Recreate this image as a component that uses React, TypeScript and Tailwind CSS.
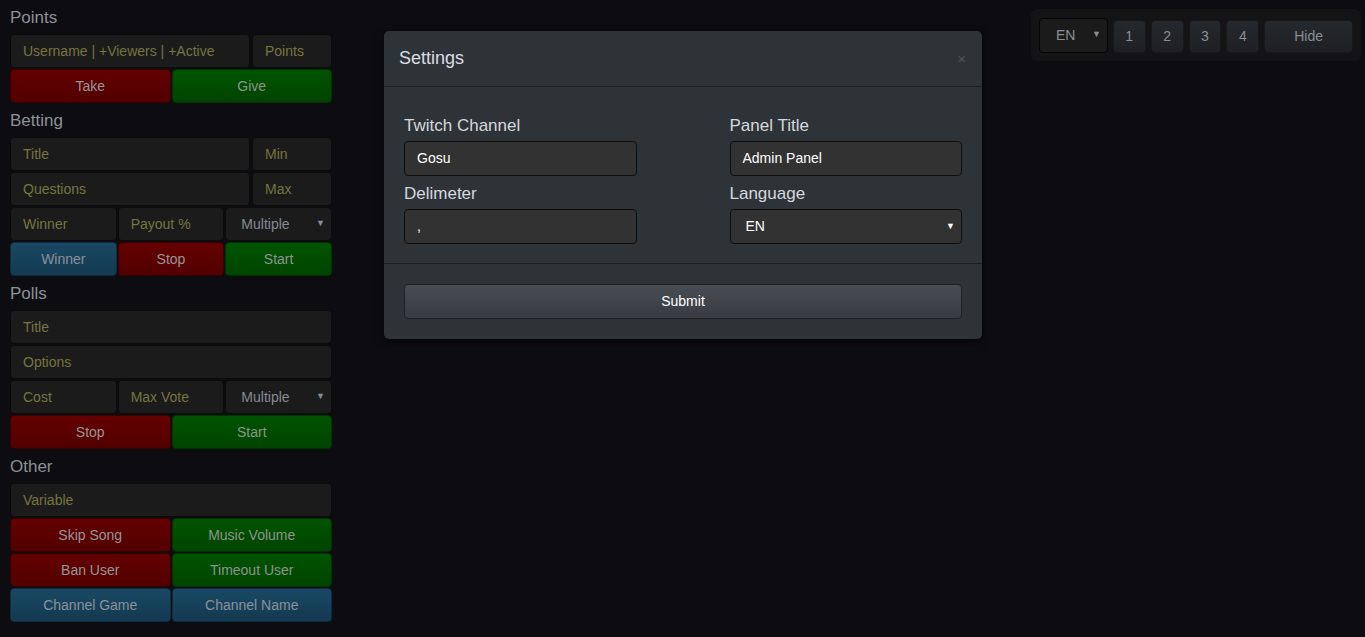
import React from "react";

const inp =
  "h-[34px] flex items-center px-[12px] rounded-[4px] bg-[#1b1b1c] border border-[#0b0b0d] text-[14px] text-[#77743f]";
const sel =
  "h-[34px] flex items-center justify-between pl-[15px] pr-[6px] rounded-[4px] bg-[#1b1b1c] border border-[#0b0b0d] text-[14px] text-[#858a93]";
const red =
  "h-[34px] flex items-center justify-center rounded-[4px] bg-gradient-to-b from-[#640000] to-[#520000] border border-[#380000] text-[14px] text-[#969696]";
const green =
  "h-[34px] flex items-center justify-center rounded-[4px] bg-gradient-to-b from-[#005400] to-[#004400] border border-[#003200] text-[14px] text-[#8b958b]";
const blue =
  "h-[34px] flex items-center justify-center rounded-[4px] bg-gradient-to-b from-[#194864] to-[#133a51] border border-[#0d2c3f] text-[14px] text-[#8b9198]";

function Caret() {
  return <span className="text-[9px] text-[#8a8d93]">▼</span>;
}

function Header({ children }: { children: React.ReactNode }) {
  return (
    <div className="h-[33px] pt-[6px] text-[17px] leading-[22px] text-[#8e9196]">{children}</div>
  );
}

function Rows({ children }: { children: React.ReactNode }) {
  return <div className="flex flex-col gap-[1px] pb-[1px]">{children}</div>;
}

export default function App() {
  return (
    <div
      className="w-[1365px] h-[637px] bg-[#0c0c11] relative overflow-hidden"
      style={{ fontFamily: '"Liberation Sans", Arial, sans-serif' }}
    >
      <div className="absolute left-[10px] top-[1px] w-[322px] flex flex-col">
        <Header>Points</Header>
        <Rows>
          <div className="flex gap-[2px]">
            <div className={inp + " w-[240px]"}>Username | +Viewers | +Active</div>
            <div className={inp + " flex-1"}>Points</div>
          </div>
          <div className="grid grid-cols-2 gap-[1px]">
            <div className={red}>Take</div>
            <div className={green}>Give</div>
          </div>
        </Rows>
        <Header>Betting</Header>
        <Rows>
          <div className="flex gap-[2px]">
            <div className={inp + " w-[240px]"}>Title</div>
            <div className={inp + " flex-1"}>Min</div>
          </div>
          <div className="flex gap-[2px]">
            <div className={inp + " w-[240px]"}>Questions</div>
            <div className={inp + " flex-1"}>Max</div>
          </div>
          <div className="grid grid-cols-3 gap-[1px]">
            <div className={inp}>Winner</div>
            <div className={inp}>Payout %</div>
            <div className={sel}>
              <span>Multiple</span>
              <Caret />
            </div>
          </div>
          <div className="grid grid-cols-3 gap-[1px]">
            <div className={blue}>Winner</div>
            <div className={red}>Stop</div>
            <div className={green}>Start</div>
          </div>
        </Rows>
        <Header>Polls</Header>
        <Rows>
          <div className={inp}>Title</div>
          <div className={inp}>Options</div>
          <div className="grid grid-cols-3 gap-[1px]">
            <div className={inp}>Cost</div>
            <div className={inp}>Max Vote</div>
            <div className={sel}>
              <span>Multiple</span>
              <Caret />
            </div>
          </div>
          <div className="grid grid-cols-2 gap-[1px]">
            <div className={red}>Stop</div>
            <div className={green}>Start</div>
          </div>
        </Rows>
        <Header>Other</Header>
        <Rows>
          <div className={inp}>Variable</div>
          <div className="grid grid-cols-2 gap-[1px]">
            <div className={red}>Skip Song</div>
            <div className={green}>Music Volume</div>
          </div>
          <div className="grid grid-cols-2 gap-[1px]">
            <div className={red}>Ban User</div>
            <div className={green}>Timeout User</div>
          </div>
          <div className="grid grid-cols-2 gap-[1px]">
            <div className={blue}>Channel Game</div>
            <div className={blue}>Channel Name</div>
          </div>
        </Rows>
      </div>

      {/* Modal */}
      <div className="absolute left-[384px] top-[31px] w-[598px] h-[308px] rounded-[5px] bg-[#2e3338] shadow-[0_3px_9px_rgba(0,0,0,0.5)] flex flex-col">
        <div className="h-[56px] border-b border-[#1c1e22] flex items-center justify-between pl-[15px] pr-[16px]">
          <span className="text-[18px] text-[#dadde2]">Settings</span>
          <span className="text-[15px] text-[#4e545b] leading-none">×</span>
        </div>
        <div className="h-[177px] border-b border-[#1c1e22] px-[20px] pt-[28px] grid grid-cols-2 gap-x-[93px] content-start">
          <div className="flex flex-col">
            <div className="text-[17px] leading-[22px] text-[#d5d8dc] mb-[4px]">Twitch Channel</div>
            <div className="h-[35px] rounded-[4px] bg-[#323232] border border-[#0e0e0e] flex items-center px-[12px] text-[14px] text-white">
              Gosu
            </div>
            <div className="text-[17px] leading-[22px] text-[#d5d8dc] mt-[7px] mb-[4px]">Delimeter</div>
            <div className="h-[35px] rounded-[4px] bg-[#323232] border border-[#0e0e0e] flex items-center px-[12px] text-[14px] text-white">
              ,
            </div>
          </div>
          <div className="flex flex-col">
            <div className="text-[17px] leading-[22px] text-[#d5d8dc] mb-[4px]">Panel Title</div>
            <div className="h-[35px] rounded-[4px] bg-[#323232] border border-[#0e0e0e] flex items-center px-[12px] text-[14px] text-white">
              Admin Panel
            </div>
            <div className="text-[17px] leading-[22px] text-[#d5d8dc] mt-[7px] mb-[4px]">Language</div>
            <div className="h-[35px] rounded-[4px] bg-[#323232] border border-[#0e0e0e] flex items-center justify-between pl-[15px] pr-[6px] text-[14px] text-white">
              <span>EN</span>
              <span className="text-[9px] text-white">▼</span>
            </div>
          </div>
        </div>
        <div className="px-[20px] pt-[20px]">
          <div className="h-[35px] rounded-[4px] bg-gradient-to-b from-[#484c53] to-[#383c42] border border-[#1f2125] flex items-center justify-center text-[14px] text-white">
            Submit
          </div>
        </div>
      </div>

      {/* Top right toolbar */}
      <div className="absolute left-[1031px] top-[9px] w-[330px] h-[52px] rounded-[6px] bg-[#141417] px-[8px] flex items-center gap-[5px]">
        <div className="w-[69px] h-[35px] rounded-[4px] bg-[#1b1b1c] border border-[#050507] flex items-center justify-between pl-[16px] pr-[6px] text-[14px] text-[#8a8f96]">
          <span>EN</span>
          <Caret />
        </div>
        {["1", "2", "3", "4"].map((n) => (
          <div
            key={n}
            className="w-[33px] h-[33px] mt-[2px] rounded-[4px] bg-gradient-to-b from-[#25282c] to-[#1e2024] border border-[#17181b] flex items-center justify-center text-[14px] text-[#8a8f96]"
          >
            {n}
          </div>
        ))}
        <div className="w-[89px] h-[33px] mt-[2px] rounded-[4px] bg-gradient-to-b from-[#25282c] to-[#1e2024] border border-[#17181b] flex items-center justify-center text-[14px] text-[#8a8f96]">
          Hide
        </div>
      </div>
    </div>
  );
}
